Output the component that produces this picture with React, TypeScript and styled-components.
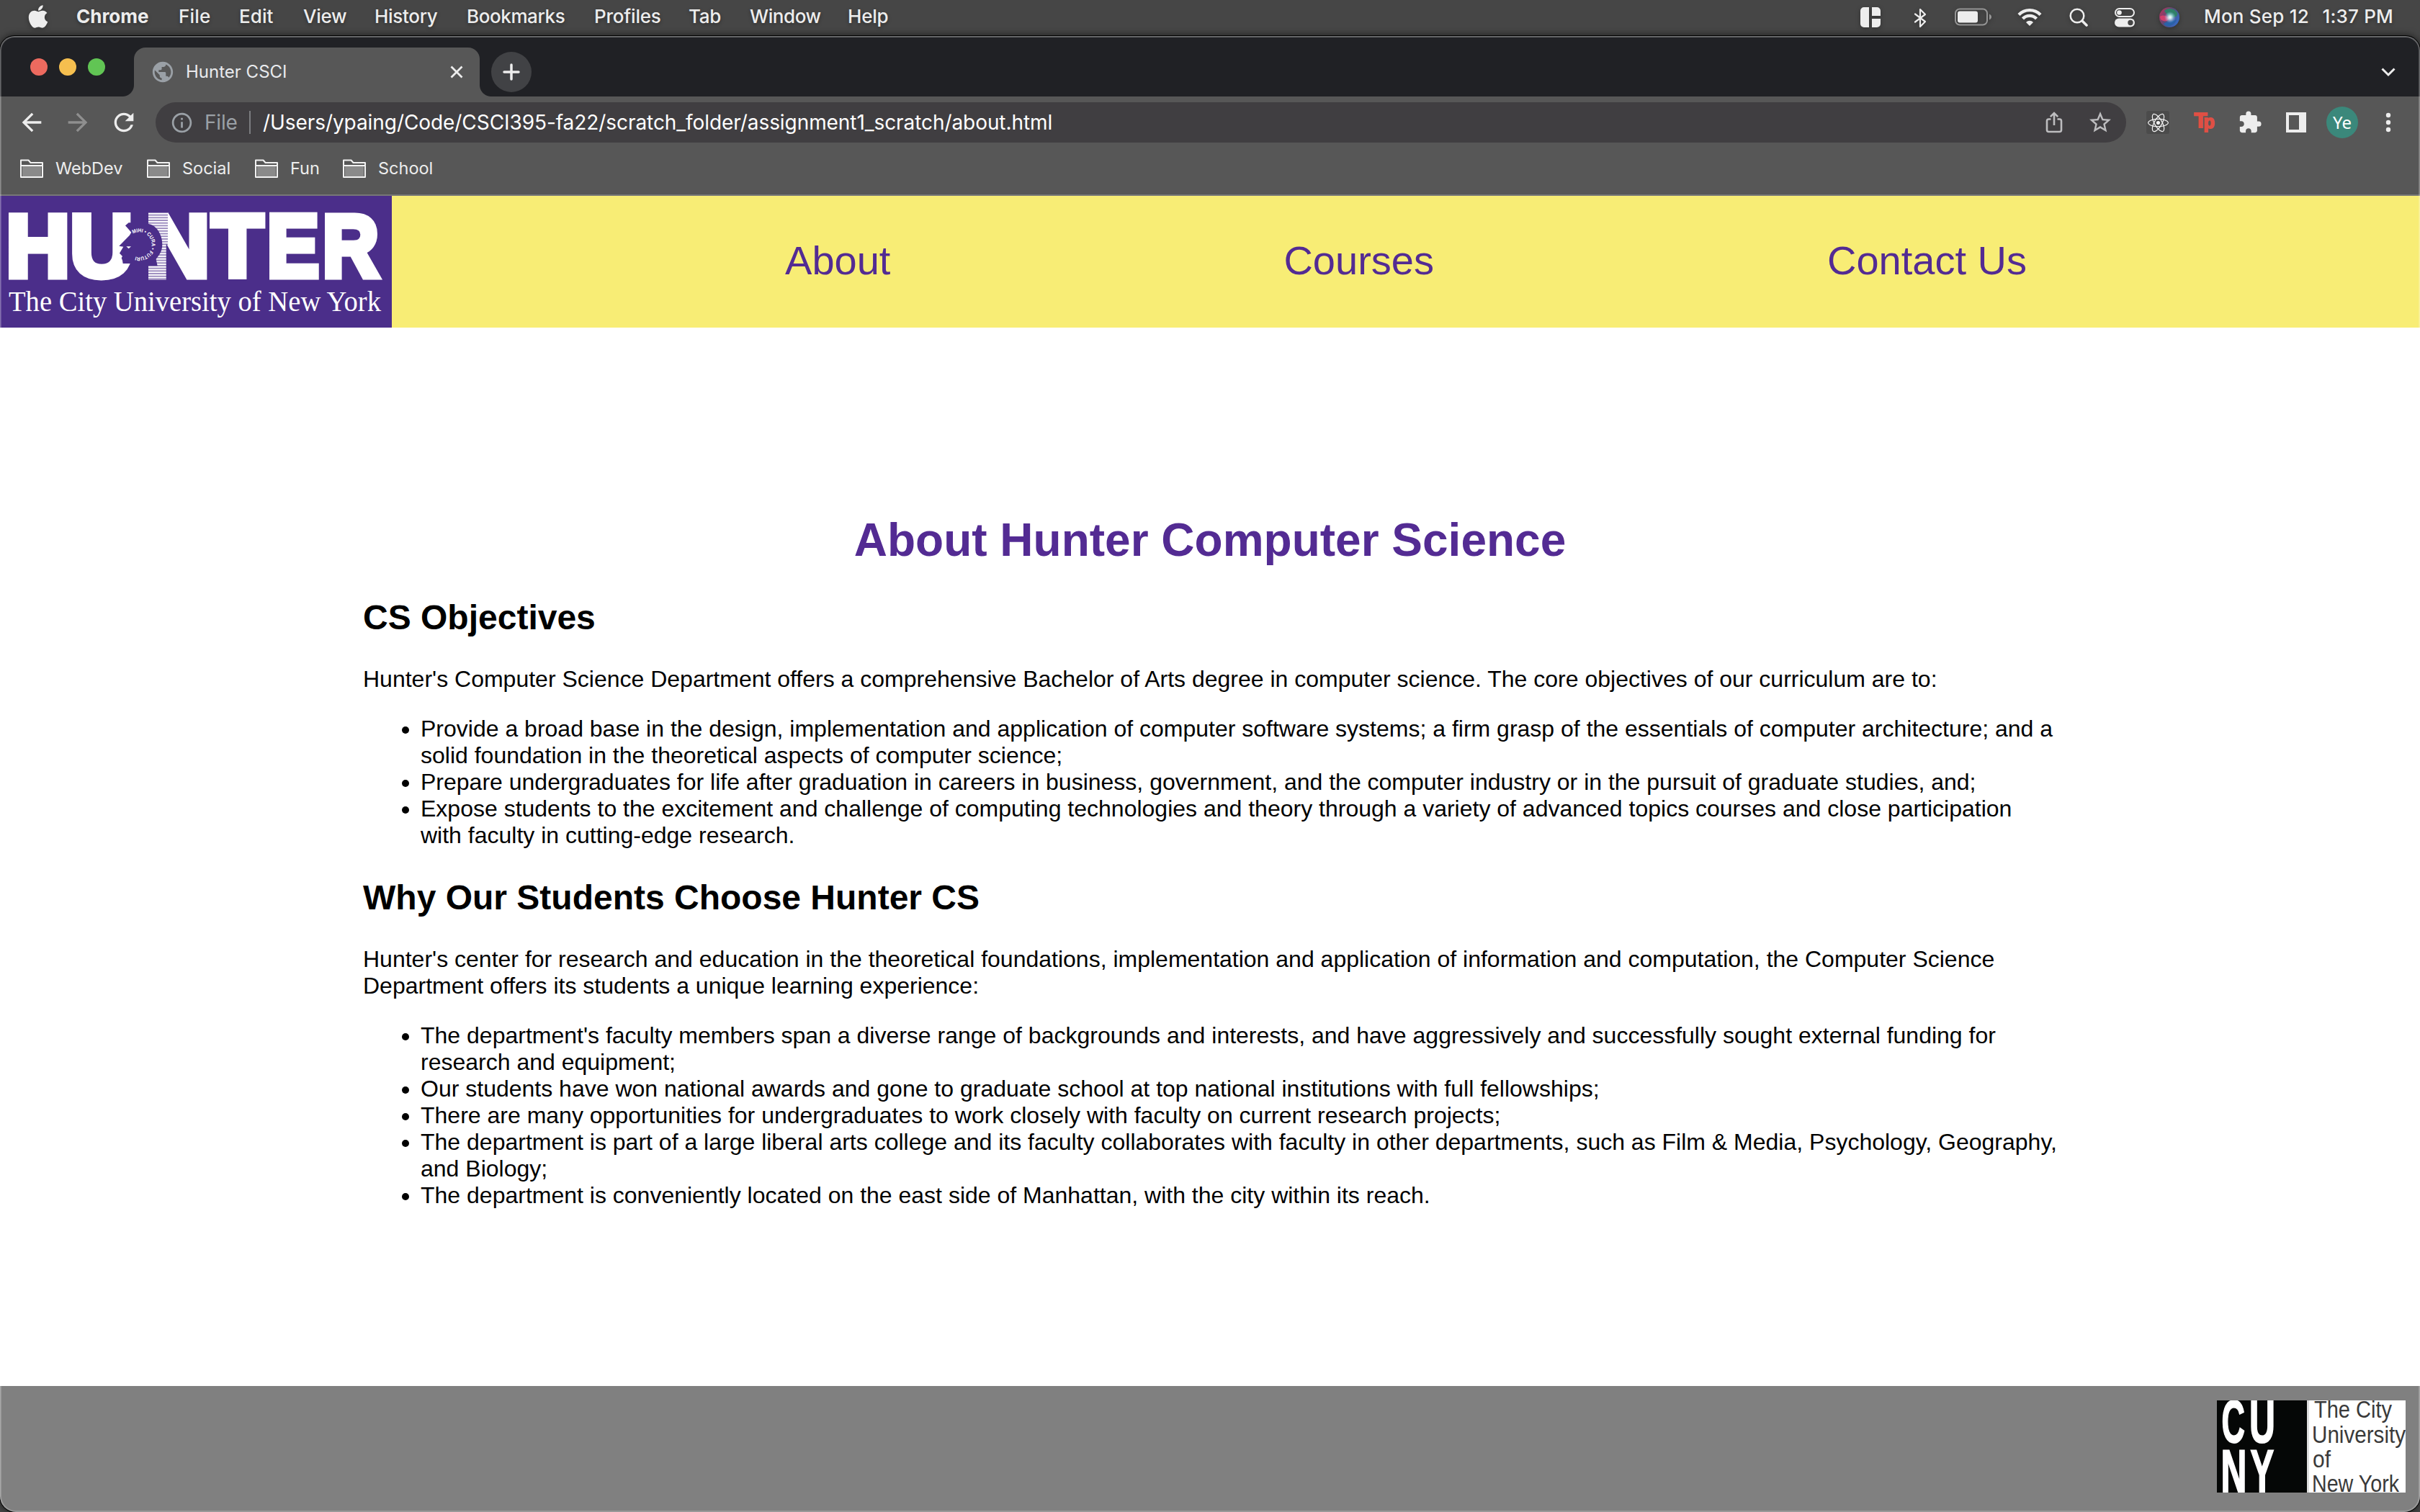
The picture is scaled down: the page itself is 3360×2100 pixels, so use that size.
import React from "react";
import styled, { createGlobalStyle } from "styled-components";
import { FaApple, FaReact } from "react-icons/fa";
import {
  MdArrowBack,
  MdArrowForward,
  MdExtension,
  MdInfoOutline,
  MdPublic,
  MdRefresh,
  MdStarBorder,
} from "react-icons/md";

const GlobalStyle = createGlobalStyle`
  * { box-sizing: border-box; }
  html, body { margin: 0; padding: 0; background: #464646; }
  svg { display: block; flex: none; }
`;

const UI_FONT = `Inter, Roboto, "Liberation Sans", sans-serif`;
const PAGE_FONT = `"Liberation Sans", Helvetica, Arial, sans-serif`;

const Desktop = styled.div`
  width: 3360px;
  height: 2100px;
  display: flex;
  flex-direction: column;
  overflow: hidden;
  background: #464646;
  font-family: ${UI_FONT};
`;

/* ---------- macOS menu bar ---------- */

const MenuBar = styled.header`
  height: 48px;
  flex: none;
  display: flex;
  align-items: center;
  justify-content: space-between;
  color: #ededed;
  font-size: 26px;
  line-height: 44px;
  text-shadow: 0 2px 5px rgba(0, 0, 0, 0.35);
  svg { filter: drop-shadow(0 2px 3px rgba(0, 0, 0, 0.3)); }
`;

const Menus = styled.nav`
  display: flex;
  align-items: center;
  padding: 0 0 2px 35px;
`;

const AppleSlot = styled.div`
  width: 71px;
  height: 44px;
  display: flex;
  align-items: center;
`;

const MenuItem = styled.span<{ $w: number; $bold?: boolean; $ls?: number }>`
  width: ${(p) => p.$w}px;
  white-space: nowrap;
  font-weight: ${(p) => (p.$bold ? 700 : 500)};
  letter-spacing: ${(p) => p.$ls ?? 0}px;
`;

const StatusArea = styled.div`
  display: flex;
  align-items: center;
  padding-right: 37px;
`;

const StatusIcons = styled.div`
  display: flex;
  align-items: center;
  width: 478px;
`;

const StatusSlot = styled.span<{ $w: number }>`
  width: ${(p) => p.$w}px;
  display: flex;
`;

const Clock = styled.span`
  width: 263px;
  display: flex;
  justify-content: space-between;
  padding-bottom: 2px;
  white-space: nowrap;
  font-weight: 500;
  letter-spacing: 0.2px;
`;

/* ---------- browser window ---------- */

const Window = styled.div`
  position: relative;
  margin-top: 2px;
  height: 2050px;
  flex: none;
  display: flex;
  flex-direction: column;
  border-radius: 20px 20px 22px 22px;
  overflow: hidden;
  box-shadow: 0 0 0 1px #000, 0 0 10px 2px rgba(0, 0, 0, 0.5);
  &::after {
    content: "";
    position: absolute;
    inset: 0;
    border-radius: inherit;
    box-shadow: inset 0 0 0 2px rgba(255, 255, 255, 0.2), inset 0 1px 0 1px rgba(255, 255, 255, 0.14);
    pointer-events: none;
  }
`;

const TabStrip = styled.div`
  height: 84px;
  flex: none;
  display: flex;
  align-items: flex-end;
  background: #202125;
  padding: 0 34px 0 42px;
`;

const Lights = styled.div`
  display: flex;
  gap: 16px;
  height: 84px;
  padding-top: 31px;
  width: 144px;
`;

const Light = styled.i<{ $c: string }>`
  width: 24px;
  height: 24px;
  border-radius: 50%;
  background: ${(p) => p.$c};
`;

const Tab = styled.div`
  position: relative;
  width: 480px;
  height: 68px;
  border-radius: 16px 16px 0 0;
  background: #575757;
  display: flex;
  align-items: center;
  padding: 0 22px 0 23px;
  color: #e9eaed;
  font-size: 24px;
  &::before, &::after {
    content: "";
    position: absolute;
    bottom: 0;
    width: 16px;
    height: 16px;
  }
  &::before { left: -16px; background: radial-gradient(circle at 0 0, #202125 15.5px, #575757 16.5px); }
  &::after { right: -16px; background: radial-gradient(circle at 100% 0, #202125 15.5px, #575757 16.5px); }
`;

const TabTitle = styled.span`
  flex: 1;
  margin-left: 15px;
  padding-bottom: 2px;
`;

const NewTab = styled.div`
  width: 56px;
  height: 56px;
  border-radius: 50%;
  background: #414245;
  margin: 0 auto 6px 16px;
  display: flex;
  align-items: center;
  justify-content: center;
`;

const StripChevron = styled.div`
  height: 68px;
  display: flex;
  align-items: center;
`;

const Toolbar = styled.div`
  height: 72px;
  flex: none;
  display: flex;
  align-items: center;
  background: #575757;
  padding: 0 37px 0 24px;
  color: #ededed;
`;

const NavButtons = styled.div`
  width: 192px;
  display: flex;
  gap: 24px;
  align-items: center;
`;

const Omnibox = styled.div`
  width: 2736px;
  height: 56px;
  border-radius: 28px;
  background: #403e41;
  display: flex;
  align-items: center;
  padding: 0 18px 0 20px;
  font-size: 28px;
  color: #9aa0a6;
`;

const Scheme = styled.span`
  width: 62px;
  margin-left: 15px;
  letter-spacing: -0.2px;
`;

const Divider = styled.i`
  width: 2px;
  height: 32px;
  background: #7b7c80;
`;

const Url = styled.span`
  flex: 1;
  margin-left: 17px;
  color: #fff;
  white-space: nowrap;
  letter-spacing: -0.07px;
`;

const OmniActions = styled.div`
  display: flex;
  align-items: center;
  gap: 34px;
  color: #bdbdbf;
`;

const Extensions = styled.div`
  display: flex;
  align-items: center;
  padding-left: 28px;
`;

const ExtSlot = styled.div<{ $gap: number }>`
  display: flex;
  margin-left: ${(p) => p.$gap}px;
`;

const ReactBadge = styled.div`
  width: 32px;
  height: 32px;
  border-radius: 3px;
  background: #4b4b4b;
  display: flex;
  align-items: center;
  justify-content: center;
  color: #f2f2f2;
`;

const Avatar = styled.div`
  width: 44px;
  height: 44px;
  border-radius: 50%;
  background: #3b887b;
  color: #fff;
  font: 400 24px/44px "Noto Sans", sans-serif;
  text-align: center;
`;

const Bookmarks = styled.div`
  height: 66px;
  flex: none;
  display: flex;
  background: #575757;
  border-bottom: 2px solid #777;
  padding: 0 28px;
  color: #ededed;
  font-size: 23.5px;
  line-height: 56px;
`;

const Bookmark = styled.div<{ $w: number }>`
  width: ${(p) => p.$w}px;
  display: flex;
  align-items: center;
  height: 56px;
  gap: 17px;
`;

/* ---------- web page ---------- */

const SiteNav = styled.nav`
  height: 183px;
  flex: none;
  display: flex;
  background: #f8ed75;
  font-family: ${PAGE_FONT};
`;

const SiteLinks = styled.div`
  flex: 1;
  display: flex;
  align-items: center;
  justify-content: space-evenly;
  padding-bottom: 3px;
`;

const SiteLink = styled.a`
  font-size: 56px;
  line-height: 64px;
  color: #532b93;
`;

const Main = styled.main`
  height: 1470px;
  flex: none;
  padding: 216px 504px 0;
  background: #fff;
  color: #000;
  font-family: ${PAGE_FONT};
  font-size: 32px;
  line-height: 37px;
`;

const Title = styled.h1`
  margin: 43px 0;
  font-size: 64px;
  line-height: 73px;
  text-align: center;
  color: #532b93;
`;

const Heading = styled.h2`
  margin: 40px 0;
  font-size: 48px;
  line-height: 55px;
`;

const Para = styled.p`
  margin: 32px 0;
`;

const List = styled.ul`
  margin: 32px 0 40px;
  padding-left: 80px;
`;

const Line = styled.span`
  display: block;
  white-space: nowrap;
`;

const Footer = styled.footer`
  flex: 1;
  display: flex;
  justify-content: flex-end;
  align-items: flex-start;
  padding: 20px 20px 0 0;
  background: #808080;
`;

const objectives = [
  [
    "Provide a broad base in the design, implementation and application of computer software systems; a firm grasp of the essentials of computer architecture; and a",
    "solid foundation in the theoretical aspects of computer science;",
  ],
  [
    "Prepare undergraduates for life after graduation in careers in business, government, and the computer industry or in the pursuit of graduate studies, and;",
  ],
  [
    "Expose students to the excitement and challenge of computing technologies and theory through a variety of advanced topics courses and close participation",
    "with faculty in cutting-edge research.",
  ],
];

const reasons = [
  [
    "The department's faculty members span a diverse range of backgrounds and interests, and have aggressively and successfully sought external funding for",
    "research and equipment;",
  ],
  ["Our students have won national awards and gone to graduate school at top national institutions with full fellowships;"],
  ["There are many opportunities for undergraduates to work closely with faculty on current research projects;"],
  [
    "The department is part of a large liberal arts college and its faculty collaborates with faculty in other departments, such as Film & Media, Psychology, Geography,",
    "and Biology;",
  ],
  ["The department is conveniently located on the east side of Manhattan, with the city within its reach."],
];

const BulletList = ({ items }: { items: string[][] }) => (
  <List>
    {items.map((lines) => (
      <li key={lines[0]}>
        {lines.map((l) => (
          <Line key={l}>{l}</Line>
        ))}
      </li>
    ))}
  </List>
);

const menus: [string, number, number][] = [
  ["File", 84, 0.2],
  ["Edit", 89, 0.1],
  ["View", 99, -0.3],
  ["History", 128, -0.3],
  ["Bookmarks", 177, -0.4],
  ["Profiles", 131, -0.2],
  ["Tab", 85, -0.3],
  ["Window", 136, -0.4],
  ["Help", 80, -0.2],
];

const FolderIcon = () => (
  <svg width="32" height="26" viewBox="0 0 32 26">
    <path d="M1 25V1.5h10.5L14.5 5H31v20z" fill="none" stroke="#f2f2f2" strokeWidth="2" strokeLinejoin="round" />
    <path d="M3 10h26v14H3z" fill="#8a8a8a" />
    <path d="M1 9h30" stroke="#f2f2f2" strokeWidth="2" />
  </svg>
);

const StatusIconRow = () => (
  <StatusIcons>
    <StatusSlot $w={75}>
      <svg width="30" height="30" viewBox="0 0 30 30" fill="#ededed">
        <path d="M6 1h7v28H6a5 5 0 0 1-5-5V6a5 5 0 0 1 5-5zM17 1h7a5 5 0 0 1 5 5v7H17zM17 17h12v7a5 5 0 0 1-5 5h-7z" />
      </svg>
    </StatusSlot>
    <StatusSlot $w={57}>
      <svg width="18" height="30" viewBox="0 0 18 30" fill="none" stroke="#ededed" strokeWidth="2.200" strokeLinejoin="round" strokeLinecap="round">
        <path d="M2 10.500l14 10.500-7 7V4l7 7L2 21.500" />
      </svg>
    </StatusSlot>
    <StatusSlot $w={87}>
      <svg width="52" height="26" viewBox="0 0 52 26">
        <rect x="1" y="1.500" width="44" height="22" rx="6" fill="none" stroke="#959595" strokeWidth="2" />
        <rect x="4" y="4.500" width="28" height="16" rx="3" fill="#ededed" />
        <path d="M48 8.500c4 1.500 4 6.500 0 8z" fill="#959595" />
      </svg>
    </StatusSlot>
    <StatusSlot $w={72}>
      <svg width="34" height="26" viewBox="0 0 34 26" fill="none" stroke="#ededed" strokeWidth="4.300">
        <path d="M2 9.500c8-8.500 22-8.500 30 0" />
        <path d="M7.500 15c5-5.500 14-5.500 19 0" />
        <path d="M12 20c3-3 7-3 10 0l-5 5z" fill="#ededed" stroke="none" />
      </svg>
    </StatusSlot>
    <StatusSlot $w={63}>
      <svg width="27" height="27" viewBox="0 0 27 27" fill="none" stroke="#ededed" strokeLinecap="round">
        <circle cx="11" cy="11" r="9.300" strokeWidth="2.500" />
        <path d="M18 18l6 6" strokeWidth="3.600" />
      </svg>
    </StatusSlot>
    <StatusSlot $w={62}>
      <svg width="28" height="28" viewBox="0 0 28 28">
        <rect x="1" y="2" width="26" height="11" rx="5.500" fill="none" stroke="#ededed" strokeWidth="2" />
        <circle cx="6.500" cy="7.500" r="3.300" fill="#ededed" />
        <rect x="0" y="15.500" width="28" height="12" rx="6" fill="#ededed" />
        <circle cx="22" cy="21.500" r="3.700" fill="#464646" />
      </svg>
    </StatusSlot>
    <svg width="28" height="28" viewBox="0 0 28 28">
      <defs>
        <linearGradient id="siriBase" x1="0" y1="0.200" x2="1" y2="0.800">
          <stop offset="0" stopColor="#b0365c" />
          <stop offset="0.450" stopColor="#5b4a78" />
          <stop offset="1" stopColor="#2f6fd0" />
        </linearGradient>
        <radialGradient id="siriGlow">
          <stop offset="0" stopColor="#fff" />
          <stop offset="0.300" stopColor="#dff" stopOpacity="0.800" />
          <stop offset="1" stopColor="#8cf" stopOpacity="0" />
        </radialGradient>
      </defs>
      <circle cx="14" cy="14" r="14" fill="url(#siriBase)" />
      <path d="M7 5c5-5 14-4 18 3 1 4-3 7-8 6-5-1-7-5-10-9z" fill="#2f8068" />
      <path d="M1 13c5-3 10-1 13 3-4 5-8 4-12 1z" fill="#e8406c" opacity="0.800" />
      <path d="M6 23c5-4 13-3 18-6-2 8-13 13-18 6z" fill="#2a62a8" />
      <circle cx="15" cy="14" r="8" fill="url(#siriGlow)" />
    </svg>
  </StatusIcons>
);

const wordmark: [string, number, number][] = [
  ["H", 8.3, 1],
  ["U", 97.3, 1],
  ["N", 202.3, 1],
  ["T", 294, 0.95],
  ["E", 370.7, 0.88],
  ["R", 447.7, 0.88],
];

const HunterLogo = () => (
  <svg width="544" height="183" viewBox="0 0 544 183">
    <rect width="544" height="183" fill="#4b2e8a" />
    <g fill="#fff" stroke="#fff" strokeWidth="9" fontFamily="Liberation Sans" fontWeight="700" fontSize="123">
      {wordmark.map(([ch, x, sx]) => (
        <text key={ch} transform={`translate(${x} 112) scale(${sx} 1)`}>
          {ch}
        </text>
      ))}
    </g>
    <g fill="#4b2e8a" opacity="0.550">
      {Array.from({ length: 26 }, (_, i) => (
        <rect key={i} x="205" y={22 + i * 3.7} width="28" height="1.900" />
      ))}
    </g>
    <g transform="translate(150 18) scale(0.3333)">
      <path
        d="M72 70L86 58L94 58L94 14L166 14L166 62C200 66 226 105 226 148C226 182 208 198 200 210L206 238L167 238L167 300L93 300L93 228L62 228L60 215L56 205L60 198L48 185L58 168L64 158L46 155L90 110L97 98Z"
        fill="#4b2e8a"
      />
      <path d="M76 157h20l-10 9z" fill="#fff" />
      <path id="ring" d="M104 104A52 52 0 1 1 112 198" fill="none" />
      <text fontFamily="Liberation Sans" fontWeight="700" fontSize="22" fill="#fff">
        <textPath href="#ring" textLength="205" lengthAdjust="spacingAndGlyphs">
          MIHI • CURA • FUTURI
        </textPath>
      </text>
    </g>
    <text x="12" y="160" textLength="517" lengthAdjust="spacingAndGlyphs" fontFamily="Liberation Serif" fontSize="41" fill="#fff">
      The City University of New York
    </text>
  </svg>
);

const CunyLogo = () => (
  <svg width="262" height="128" viewBox="0 0 262 128">
    <rect width="262" height="128" fill="#fff" />
    <rect width="125" height="128" fill="#050706" />
    <rect x="125" width="3" height="128" fill="#ddd" />
    <g fill="#fff" stroke="#fff" strokeWidth="2" fontFamily="Liberation Sans" fontWeight="700" fontSize="83">
      <text transform="translate(6.500 57.500) scale(0.540 1)">C</text>
      <text transform="translate(45 57.500) scale(0.600 1)">U</text>
      <text transform="translate(5.500 127) scale(0.600 1)">N</text>
      <text transform="translate(46.500 127) scale(0.590 1)">Y</text>
    </g>
    <g fill="#3a3a3a" fontFamily="Liberation Sans" fontSize="34">
      <text x="135" y="24" textLength="108" lengthAdjust="spacingAndGlyphs">The City</text>
      <text x="132" y="58.500" textLength="130" lengthAdjust="spacingAndGlyphs">University</text>
      <text x="133" y="93" textLength="25" lengthAdjust="spacingAndGlyphs">of</text>
      <text x="132" y="127" textLength="121" lengthAdjust="spacingAndGlyphs">New York</text>
    </g>
  </svg>
);

export default function App() {
  return (
    <Desktop>
      <GlobalStyle />
      <MenuBar>
        <Menus>
          <AppleSlot>
            <FaApple size={36} />
          </AppleSlot>
          <MenuItem $w={142} $bold>
            Chrome
          </MenuItem>
          {menus.map(([label, w, ls]) => (
            <MenuItem key={label} $w={w} $ls={ls}>
              {label}
            </MenuItem>
          ))}
        </Menus>
        <StatusArea>
          <StatusIconRow />
          <Clock>
            <span>Mon Sep 12</span>
            <span>1:37 PM</span>
          </Clock>
        </StatusArea>
      </MenuBar>

      <Window>
        <TabStrip>
          <Lights>
            <Light $c="#ed6a5f" />
            <Light $c="#f5bf4f" />
            <Light $c="#61c554" />
          </Lights>
          <Tab>
            <MdPublic size={34} color="#9aa0a6" />
            <TabTitle>Hunter CSCI</TabTitle>
            <svg width="20" height="20" viewBox="0 0 20 20" stroke="#ededed" strokeWidth="2.800">
              <path d="M2.500 2.500l15 15M17.500 2.500l-15 15" />
            </svg>
          </Tab>
          <NewTab>
            <svg width="24" height="24" viewBox="0 0 24 24" stroke="#ededed" strokeWidth="3.500" strokeLinecap="round">
              <path d="M12 2v20M2 12h20" />
            </svg>
          </NewTab>
          <StripChevron>
            <svg width="20" height="14" viewBox="0 0 20 14" fill="none" stroke="#ededed" strokeWidth="3">
              <path d="M1.500 2.500l8.500 8.500 8.500-8.500" />
            </svg>
          </StripChevron>
        </TabStrip>

        <Toolbar>
          <NavButtons>
            <MdArrowBack size={40} />
            <MdArrowForward size={40} color="#8f8f8f" />
            <MdRefresh size={40} />
          </NavButtons>
          <Omnibox>
            <MdInfoOutline size={33} />
            <Scheme>File</Scheme>
            <Divider />
            <Url>/Users/ypaing/Code/CSCI395-fa22/scratch_folder/assignment1_scratch/about.html</Url>
            <OmniActions>
              <svg width="24" height="30" viewBox="0 0 24 30" fill="none" stroke="#bdbdbf" strokeWidth="2.600">
                <path d="M7.500 10.500H4.500A2.500 2.500 0 0 0 2 13v12.500A2.500 2.500 0 0 0 4.500 28h15a2.500 2.500 0 0 0 2.500-2.500V13a2.500 2.500 0 0 0-2.500-2.500h-3M12 19V2.500M6.800 7.200L12 2l5.200 5.200" />
              </svg>
              <MdStarBorder size={36} />
            </OmniActions>
          </Omnibox>
          <Extensions>
            <ReactBadge>
              <FaReact size={29} />
            </ReactBadge>
            <ExtSlot $gap={34}>
              <svg width="31" height="30" viewBox="0 0 31 30" fontFamily="Liberation Sans" fontWeight="700" fill="#e04f44" stroke="#e04f44">
                <text x="0.500" y="22" fontSize="29" strokeWidth="2">T</text>
                <text x="13.500" y="22.500" fontSize="25" strokeWidth="1.800">p</text>
              </svg>
            </ExtSlot>
            <ExtSlot $gap={30}>
              <MdExtension size={34} />
            </ExtSlot>
            <ExtSlot $gap={33}>
              <svg width="28" height="28" viewBox="0 0 28 28">
                <path d="M0 0h28v28H0zM4 4v20h14V4z" fill="#ededed" fillRule="evenodd" />
              </svg>
            </ExtSlot>
            <ExtSlot $gap={28}>
              <Avatar>Ye</Avatar>
            </ExtSlot>
            <ExtSlot $gap={35}>
              <svg width="14" height="28" viewBox="0 0 14 28" fill="#ededed">
                <circle cx="7" cy="4" r="3.200" />
                <circle cx="7" cy="14" r="3.200" />
                <circle cx="7" cy="24" r="3.200" />
              </svg>
            </ExtSlot>
          </Extensions>
        </Toolbar>

        <Bookmarks>
          <Bookmark $w={176}>
            <FolderIcon />
            WebDev
          </Bookmark>
          <Bookmark $w={150}>
            <FolderIcon />
            Social
          </Bookmark>
          <Bookmark $w={122}>
            <FolderIcon />
            Fun
          </Bookmark>
          <Bookmark $w={140}>
            <FolderIcon />
            School
          </Bookmark>
        </Bookmarks>

        <SiteNav>
          <HunterLogo />
          <SiteLinks>
            <SiteLink>About</SiteLink>
            <SiteLink>Courses</SiteLink>
            <SiteLink>Contact Us</SiteLink>
          </SiteLinks>
        </SiteNav>

        <Main>
          <Title>About Hunter Computer Science</Title>
          <Heading>CS Objectives</Heading>
          <Para>
            Hunter's Computer Science Department offers a comprehensive Bachelor of Arts degree in computer science. The
            core objectives of our curriculum are to:
          </Para>
          <BulletList items={objectives} />
          <Heading>Why Our Students Choose Hunter CS</Heading>
          <Para>
            <Line>
              Hunter's center for research and education in the theoretical foundations, implementation and application of
              information and computation, the Computer Science
            </Line>
            <Line>Department offers its students a unique learning experience:</Line>
          </Para>
          <BulletList items={reasons} />
        </Main>

        <Footer>
          <CunyLogo />
        </Footer>
      </Window>
    </Desktop>
  );
}
